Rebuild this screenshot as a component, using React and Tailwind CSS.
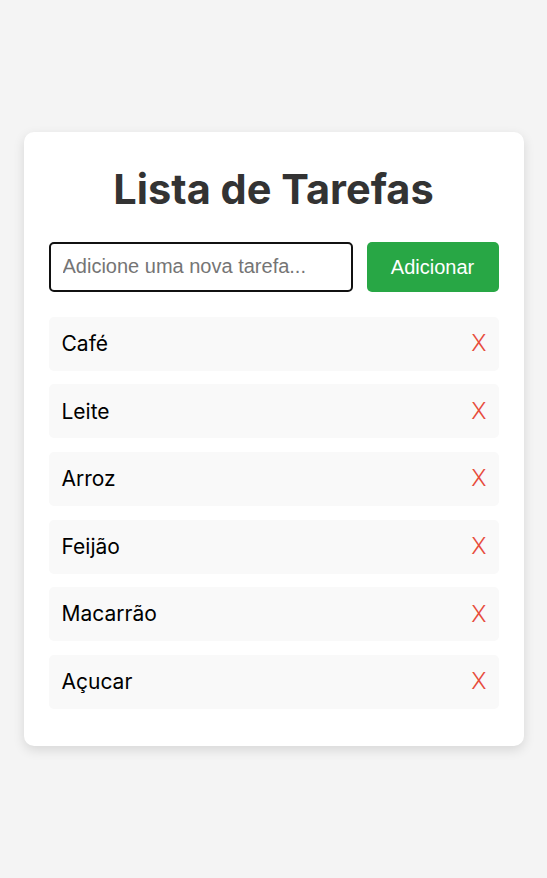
import React, { useState } from 'react';

const initial = ['Café', 'Leite', 'Arroz', 'Feijão', 'Macarrão', 'Açucar'];

const App = () => {
  const [tasks, setTasks] = useState(initial);
  const [text, setText] = useState('');

  const addTask = () => {
    if (!text.trim()) return;
    setTasks([...tasks, text.trim()]);
    setText('');
  };

  return (
    <div className="min-h-screen bg-[#f4f4f4] flex items-center justify-center font-['Inter',sans-serif]">
      <div className="w-[500px] bg-white rounded-[10px] shadow-[0_4px_12px_rgba(0,0,0,0.12)] px-[25px] pt-[27px] pb-[24px]">
        <h1 className="text-center text-[41.5px] leading-[60px] font-bold text-[#333] mb-[23px]">
          Lista de Tarefas
        </h1>
        <div className="flex gap-[14px] mb-[25px]">
          <input
            value={text}
            onChange={(e) => setText(e.target.value)}
            placeholder="Adicione uma nova tarefa..."
            className="flex-1 h-[50px] border-2 border-[#111] rounded-[5px] px-[12px] text-[20px] font-['Liberation_Sans',Arial,sans-serif] placeholder:text-[#757575] outline-none"
          />
          <button
            onClick={addTask}
            className="w-[132px] h-[50px] bg-[#28a745] text-white rounded-[5px] text-[20px] font-['Liberation_Sans',Arial,sans-serif]"
          >
            Adicionar
          </button>
        </div>
        <ul>
          {tasks.map((task, i) => (
            <li
              key={i}
              className="flex items-center justify-between h-[54px] bg-[#f9f9f9] rounded-[5px] pl-[13px] pr-[12px] mb-[13.6px] text-[21px] text-black"
            >
              <span>{task}</span>
              <button
                onClick={() => setTasks(tasks.filter((_, j) => j !== i))}
                className="text-[#e74c3c] text-[23px] font-light leading-none"
              >
                X
              </button>
            </li>
          ))}
        </ul>
      </div>
    </div>
  );
};

export default App;
